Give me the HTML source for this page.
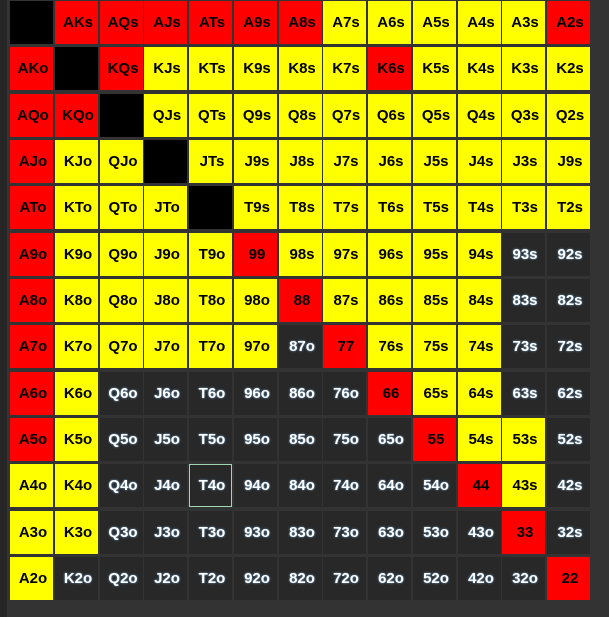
<!DOCTYPE html><html><head><style>
body{margin:0;width:609px;height:617px;background:#333333;position:relative;overflow:hidden;font-family:"Liberation Sans",sans-serif;}
.strip{position:absolute;left:0;top:0;width:7px;height:617px;background:#262626}
.c{position:absolute;width:43px;height:43px;display:flex;align-items:center;justify-content:center;font-weight:bold;font-size:15px;box-sizing:border-box;padding-left:3px}
.R{background:#ff0000;color:#000}.Y{background:#ffff00;color:#000}.K{background:#000}.D{background:#282828;color:#fff;text-shadow:0 0 2px #6fa6d6}
.sel{outline:1px solid #9fd8b0;outline-offset:-1px}
</style></head><body><div class="strip"></div><div id="g"></div>
<script>
var rows=[
"K:,R:AKs,R:AQs,R:AJs,R:ATs,R:A9s,R:A8s,Y:A7s,Y:A6s,Y:A5s,Y:A4s,Y:A3s,R:A2s",
"R:AKo,K:,R:KQs,Y:KJs,Y:KTs,Y:K9s,Y:K8s,Y:K7s,R:K6s,Y:K5s,Y:K4s,Y:K3s,Y:K2s",
"R:AQo,R:KQo,K:,Y:QJs,Y:QTs,Y:Q9s,Y:Q8s,Y:Q7s,Y:Q6s,Y:Q5s,Y:Q4s,Y:Q3s,Y:Q2s",
"R:AJo,Y:KJo,Y:QJo,K:,Y:JTs,Y:J9s,Y:J8s,Y:J7s,Y:J6s,Y:J5s,Y:J4s,Y:J3s,Y:J9s",
"R:ATo,Y:KTo,Y:QTo,Y:JTo,K:,Y:T9s,Y:T8s,Y:T7s,Y:T6s,Y:T5s,Y:T4s,Y:T3s,Y:T2s",
"R:A9o,Y:K9o,Y:Q9o,Y:J9o,Y:T9o,R:99,Y:98s,Y:97s,Y:96s,Y:95s,Y:94s,D:93s,D:92s",
"R:A8o,Y:K8o,Y:Q8o,Y:J8o,Y:T8o,Y:98o,R:88,Y:87s,Y:86s,Y:85s,Y:84s,D:83s,D:82s",
"R:A7o,Y:K7o,Y:Q7o,Y:J7o,Y:T7o,Y:97o,D:87o,R:77,Y:76s,Y:75s,Y:74s,D:73s,D:72s",
"R:A6o,Y:K6o,D:Q6o,D:J6o,D:T6o,D:96o,D:86o,D:76o,R:66,Y:65s,Y:64s,D:63s,D:62s",
"R:A5o,Y:K5o,D:Q5o,D:J5o,D:T5o,D:95o,D:85o,D:75o,D:65o,R:55,Y:54s,Y:53s,D:52s",
"Y:A4o,Y:K4o,D:Q4o,D:J4o,D:T4o,D:94o,D:84o,D:74o,D:64o,D:54o,R:44,Y:43s,D:42s",
"Y:A3o,Y:K3o,D:Q3o,D:J3o,D:T3o,D:93o,D:83o,D:73o,D:63o,D:53o,D:43o,R:33,D:32s",
"Y:A2o,D:K2o,D:Q2o,D:J2o,D:T2o,D:92o,D:82o,D:72o,D:62o,D:52o,D:42o,D:32o,R:22"];
var h="";
rows.forEach(function(r,i){r.split(",").forEach(function(c,j){var p=c.split(":");
var x=Math.round(10+j*44.75),y=Math.round(1+i*46.33);
h+='<div class="c '+p[0]+(i==10&&j==4?' sel':'')+'" style="left:'+x+'px;top:'+y+'px">'+p[1]+'</div>';});});
document.getElementById("g").innerHTML=h;
</script></body></html>
